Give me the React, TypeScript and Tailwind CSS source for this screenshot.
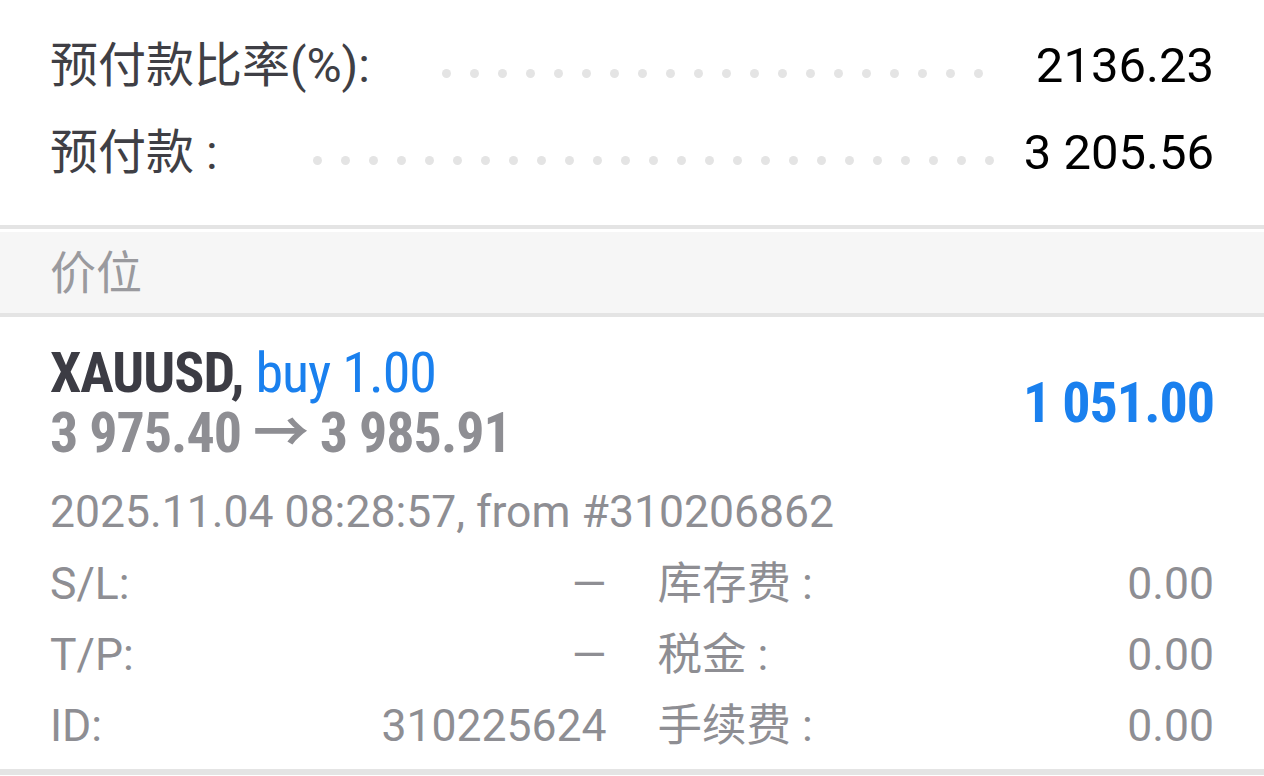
const cjk = "font-['Roboto','Noto_Sans_CJK_SC',sans-serif]";

function Dots({ count }: { count: number }) {
  return (
    <div className="flex translate-y-[8px] items-center gap-[19.5px]">
      {Array.from({ length: count }).map((_, i) => (
        <span key={i} className="h-[8.5px] w-[8.5px] shrink-0 rounded-full bg-[#e4e4e4]" />
      ))}
    </div>
  );
}

function SummaryRow({
  label,
  value,
  labelWidth,
  dots,
}: {
  label: string;
  value: string;
  labelWidth: string;
  dots: number;
}) {
  return (
    <div className="flex h-[87px] items-center">
      <div className={`${labelWidth} shrink-0 text-[48px] text-[#3f3f45]`}>{label}</div>
      <Dots count={dots} />
      <div className="flex-1" />
      <span className="shrink-0 text-[49px] text-black">{value}</span>
    </div>
  );
}

function Cell({ label, value }: { label: string; value: string }) {
  return (
    <div className="flex h-[71px] items-center justify-between">
      <span>{label}</span>
      <span>{value}</span>
    </div>
  );
}

export default function App() {
  return (
    <div className={`${cjk} h-[776px] w-[1264px] overflow-hidden bg-white leading-none`}>
      <div className="px-[50px] pt-[22px] pb-[29px]">
        <SummaryRow label="预付款比率(%):" value="2136.23" labelWidth="w-[392px]" dots={20} />
        <SummaryRow label="预付款 :" value="3 205.56" labelWidth="w-[263px]" dots={25} />
      </div>

      <div className="border-y-4 border-[#e4e4e4] bg-white pt-[3px]">
        <div className="flex h-[81px] items-center bg-[#f6f6f6] px-[50px] text-[46px] text-[#9a9a9e]">
          价位
        </div>
      </div>

      <div className="px-[50px] pt-[26px]">
        <div className="flex items-center justify-between">
          <div className="flex flex-col font-bold [font-stretch:condensed]">
            <div className="text-[56px] leading-[60px] tracking-[-1px]">
              <span className="text-[#3c3c44]">XAUUSD,</span>{" "}
              <span className="font-normal text-[#1a80ee]">buy 1.00</span>
            </div>
            <div className="text-[56px] leading-[60px] tracking-[-1px] text-[#8e8e93]">
              3 975.40 → 3 985.91
            </div>
          </div>
          <div className="text-[56px] font-bold tracking-[-1px] text-[#1a80ee] [font-stretch:condensed]">
            1 051.00
          </div>
        </div>

        <div className="mt-[27px] text-[44.5px] text-[#8e8e93]">
          2025.11.04 08:28:57, from #310206862
        </div>

        <div className="mt-[14px] grid grid-cols-2 gap-x-[51px] text-[44.5px] text-[#8e8e93]">
          <Cell label="S/L:" value="—" />
          <Cell label="库存费 :" value="0.00" />
          <Cell label="T/P:" value="—" />
          <Cell label="税金 :" value="0.00" />
          <Cell label="ID:" value="310225624" />
          <Cell label="手续费 :" value="0.00" />
        </div>
      </div>
      <div className="mt-[7px] h-[6px] bg-[#e4e4e4]" />
    </div>
  );
}
